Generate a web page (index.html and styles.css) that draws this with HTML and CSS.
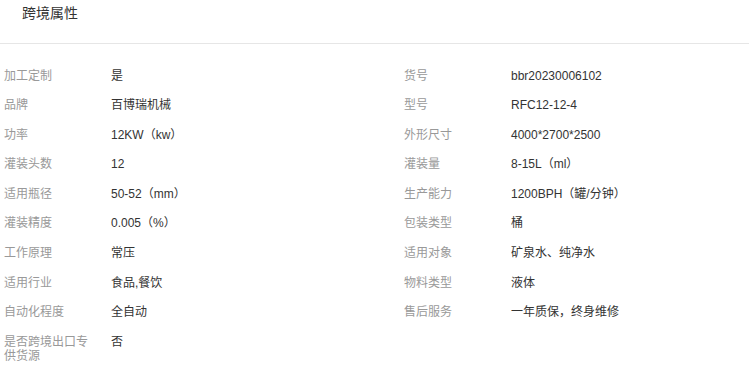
FILE: index.html
```html
<!DOCTYPE html>
<html lang="zh-CN">
<head>
  <meta charset="UTF-8">
  <title>跨境属性</title>
  <link rel="stylesheet" href="styles.css">
</head>
<body>

<!-- Cross-border attribute panel -->
<div class="attr-panel">
  <div class="attr-title">跨境属性</div>
  <ul class="attr-list">
    <li class="attr-item"><span class="attr-name">加工定制</span><span class="attr-value">是</span></li>
    <li class="attr-item"><span class="attr-name">货号</span><span class="attr-value">bbr20230006102</span></li>
    <li class="attr-item"><span class="attr-name">品牌</span><span class="attr-value">百博瑞机械</span></li>
    <li class="attr-item"><span class="attr-name">型号</span><span class="attr-value">RFC12-12-4</span></li>
    <li class="attr-item"><span class="attr-name">功率</span><span class="attr-value">12KW（kw）</span></li>
    <li class="attr-item"><span class="attr-name">外形尺寸</span><span class="attr-value">4000*2700*2500</span></li>
    <li class="attr-item"><span class="attr-name">灌装头数</span><span class="attr-value">12</span></li>
    <li class="attr-item"><span class="attr-name">灌装量</span><span class="attr-value">8-15L（ml）</span></li>
    <li class="attr-item"><span class="attr-name">适用瓶径</span><span class="attr-value">50-52（mm）</span></li>
    <li class="attr-item"><span class="attr-name">生产能力</span><span class="attr-value">1200BPH（罐/分钟）</span></li>
    <li class="attr-item"><span class="attr-name">灌装精度</span><span class="attr-value">0.005（%）</span></li>
    <li class="attr-item"><span class="attr-name">包装类型</span><span class="attr-value">桶</span></li>
    <li class="attr-item"><span class="attr-name">工作原理</span><span class="attr-value">常压</span></li>
    <li class="attr-item"><span class="attr-name">适用对象</span><span class="attr-value">矿泉水、纯净水</span></li>
    <li class="attr-item"><span class="attr-name">适用行业</span><span class="attr-value">食品,餐饮</span></li>
    <li class="attr-item"><span class="attr-name">物料类型</span><span class="attr-value">液体</span></li>
    <li class="attr-item"><span class="attr-name">自动化程度</span><span class="attr-value">全自动</span></li>
    <li class="attr-item"><span class="attr-name">售后服务</span><span class="attr-value">一年质保，终身维修</span></li>
    <li class="attr-item"><span class="attr-name">是否跨境出口专供货源</span><span class="attr-value">否</span></li>
  </ul>
</div>

</body>
</html>
```

FILE: styles.css
```css
html, body {
  margin: 0;
  padding: 0;
  background: #fff;
  overflow: hidden;
  font-family: "Liberation Sans", "Noto Sans CJK SC", sans-serif;
}

/* Panel heading */
.attr-title {
  height: 43px;
  padding: 0 22px;
  line-height: 26px;
  font-size: 14px;
  color: #333;
  border-bottom: 1px solid #e6e6e6;
}

/* Two-column attribute grid */
.attr-list {
  list-style: none;
  margin: 0;
  padding: 17px 0 0 4px;
  display: grid;
  grid-template-columns: 400px 1fr;
}
.attr-item {
  display: flex;
  align-items: flex-start;
  padding: 7.5px 0;
  font-size: 12px;
  line-height: 14.6px;
}
.attr-name {
  flex: 0 0 90px;
  margin-right: 17px;
  color: #999;
}
.attr-value {
  color: #333;
}
```
